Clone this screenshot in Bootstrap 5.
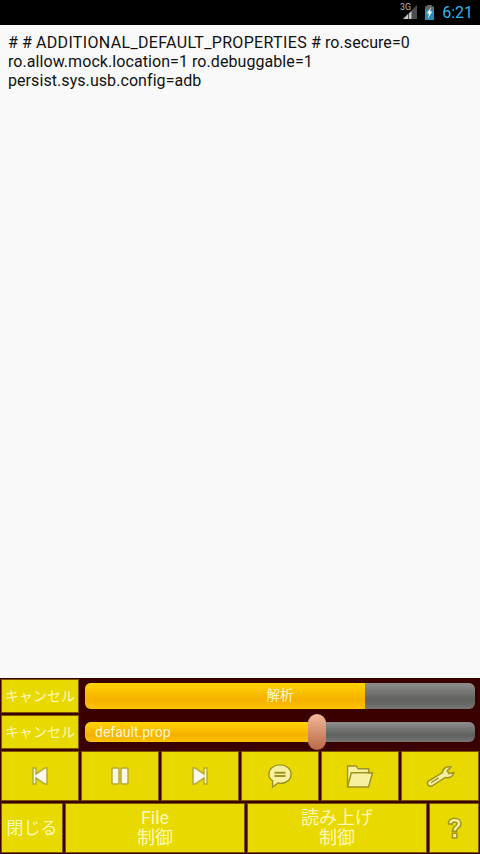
<!doctype html>
<html lang="ja"><head><meta charset="utf-8">
<link href="https://cdn.jsdelivr.net/npm/bootstrap@5.3.0/dist/css/bootstrap.min.css" rel="stylesheet">
<style>
html,body{width:480px;height:854px;margin:0;overflow:hidden;background:#000}
body{font-family:Roboto,"Noto Sans CJK JP",sans-serif}
.app-shell{width:480px;height:854px}
.status-strip{height:25px;background:#000;padding-right:7px}
.clock{color:#33b5e5;font-size:16px;line-height:25px;margin-left:8px}
.doc-text{background:#f9f9f9;color:#111;font-size:16px;line-height:19px;padding:8px 8px 0;min-height:0;letter-spacing:.07px}
.caps-run{letter-spacing:.34px}
.ctl-panel{background:#3a0000;height:176px;padding:1px;gap:2px}
.ybtn{background:#e8d900;border:1px solid #7c5500;border-radius:0;color:#fdf8b8;padding:0;line-height:20px;font-size:17px}
.ybtn:hover,.ybtn:active{background:#e8d900;color:#fdf8b8;border-color:#7c5500}
.cancel{width:78px;height:34px;font-size:14px;white-space:nowrap;flex:none}
.ctl-row{gap:2px}
.pbar-row{height:34px}
.pbar{--bs-progress-bg:transparent;background:linear-gradient(#8e8e8e,#5f615d 65%,#757575);border-radius:6px;flex:1;margin-left:4px;margin-right:4px;position:relative;overflow:visible}
.pbar-in{background:linear-gradient(#ffd400,#f6b000 65%,#fcc400);border-radius:6px 0 0 6px;height:100%}
.pbar-a{height:26px}
.pbar-b{height:20px}
.pbar-label{position:absolute;color:#fdf8d0;font-size:14px;line-height:1}
.label-a{left:0;width:390px;text-align:center;top:6px;font-size:13.5px}
.label-b{left:10px;top:3px}
.knob{position:absolute;left:223px;top:-8px;width:18px;height:36px;border-radius:9px;background:linear-gradient(#f2b89b,#d28b6a 55%,#b96a4c)}
.row3>.ybtn{flex:1 1 0;height:50px}
.row4>.ybtn{height:50px}
.w-close{width:62px;flex:none}
.w-wide{width:180px;flex:none;font-size:18px}
.w-q{width:50px;flex:none}
.row3 svg,.row4 svg{display:block;margin:auto}
</style></head><body>
<div class="app-shell d-flex flex-column">
 <div class="status-strip d-flex align-items-center justify-content-end flex-none">
  <svg width="17" height="19" viewBox="0 0 17 19" class="mb-1"><path d="M17 4V18H3Z" fill="#4d4d4d"/><path d="M8 13V18H3Z M11.500 10V18H9V12.500Z" fill="#c4c4c4"/><text x="0" y="8.500" font-size="9" fill="#b5b5b5" font-family="Roboto">3G</text></svg>
  <svg width="9" height="15" viewBox="0 0 9 15" class="ms-2"><path d="M2.500 0H6.500V1.500H9V15H0V1.500H2.500Z" fill="#2b8fb5"/><path d="M2.500 0H6.500V1.500H9V5H0V1.500H2.500Z" fill="#666"/><path d="M6 2 1.800 8.500H4L3 13.500 7.200 6.500H5Z" fill="#fff"/></svg>
  <span class="clock">6:21</span>
 </div>
 <div class="doc-text flex-grow-1">
  # # <span class="caps-run">ADDITIONAL_DEFAULT_PROPERTIES</span> # ro.secure=0<br>ro.allow.mock.location=1 ro.debuggable=1<br>persist.sys.usb.config=adb
 </div>
 <div class="ctl-panel d-flex flex-column">
  <div class="d-flex ctl-row pbar-row align-items-center">
   <button class="btn ybtn cancel">キャンセル</button>
   <div class="progress pbar pbar-a"><div class="pbar-in" style="width:280px"></div><span class="pbar-label label-a">解析</span></div>
  </div>
  <div class="d-flex ctl-row pbar-row align-items-center">
   <button class="btn ybtn cancel">キャンセル</button>
   <div class="progress pbar pbar-b"><div class="pbar-in" style="width:232px"></div><span class="pbar-label label-b">default.prop</span><span class="knob"></span></div>
  </div>
  <div class="d-flex ctl-row row3">
   <button class="btn ybtn" aria-label="前"><svg width="16" height="18" viewBox="0 0 16 18"><path d="M1 1H4V7L13 1H15V17H13L4 11V17H1Z" fill="#f8f8ef" stroke="#b5aa35" stroke-width="1.500"/></svg></button>
   <button class="btn ybtn" aria-label="一時停止"><svg width="18" height="18" viewBox="0 0 18 18"><rect x="1" y="1" width="7" height="16" rx="1.500" fill="#f8f8ef" stroke="#b5aa35" stroke-width="1.500"/><rect x="10" y="1" width="7" height="16" rx="1.500" fill="#f8f8ef" stroke="#b5aa35" stroke-width="1.500"/></svg></button>
   <button class="btn ybtn" aria-label="次"><svg width="16" height="18" viewBox="0 0 16 18"><path d="M15 1H12V7L3 1H1V17H3L12 11V17H15Z" fill="#f8f8ef" stroke="#b5aa35" stroke-width="1.500"/></svg></button>
   <button class="btn ybtn" aria-label="読み上げ"><svg width="24" height="24" viewBox="0 0 26 26"><path d="M13 1C6 1 1 5 1 11C1 14 3 17 5 18V25L11 20.500C12 21 13 21 13 21C20 21 25 17 25 11C25 5 20 1 13 1Z" fill="#f7f0a0" stroke="#9f9420" stroke-width="1.500"/><path d="M7 9.500H19M7 13H19" stroke="#9f9420" stroke-width="2"/></svg></button>
   <button class="btn ybtn" aria-label="フォルダ"><svg width="28" height="23" viewBox="0 0 28 24"><path d="M1 23V1H10L12 4H23V8H27L23 23Z" fill="#f7f0a0" stroke="#9f9420" stroke-width="1.500"/><path d="M1 23 5 8H27" fill="none" stroke="#9f9420" stroke-width="1.500"/></svg></button>
   <button class="btn ybtn" aria-label="設定"><svg width="29" height="23" viewBox="0 0 30 24"><path d="M2 17 17 8C17 4 21 1 26 2L22 6 24 9 29 8C28 12 24 14 20 13L6 22C3 23 0 20 2 17Z" fill="#f7f0a0" stroke="#9f9420" stroke-width="1.600"/><path d="M5 18.500 13 13.500" stroke="#9f9420" stroke-width="1.400"/></svg></button>
  </div>
  <div class="d-flex ctl-row row4">
   <button class="btn ybtn w-close">閉じる</button>
   <button class="btn ybtn w-wide">File<br>制御</button>
   <button class="btn ybtn w-wide">読み上げ<br>制御</button>
   <button class="btn ybtn w-q" aria-label="ヘルプ"><svg width="15" height="23" viewBox="0 0 16 24"><path d="M1.500 7C1.500 3 4.500 1 8 1C12 1 15 3.500 15 7C15 10 13 11 11.500 12C10.500 12.800 10.300 13.500 10.300 15H6C6 12 6.800 10.500 8.500 9.500C10 8.500 10.800 8 10.800 7C10.800 5.800 9.500 5 8 5C6.500 5 5.500 6 5.500 7.500Z M5.800 17H10.500V22H5.800Z" fill="#f7f0a0" stroke="#9f9420" stroke-width="1.600"/></svg></button>
  </div>
 </div>
</div>
</body></html>
